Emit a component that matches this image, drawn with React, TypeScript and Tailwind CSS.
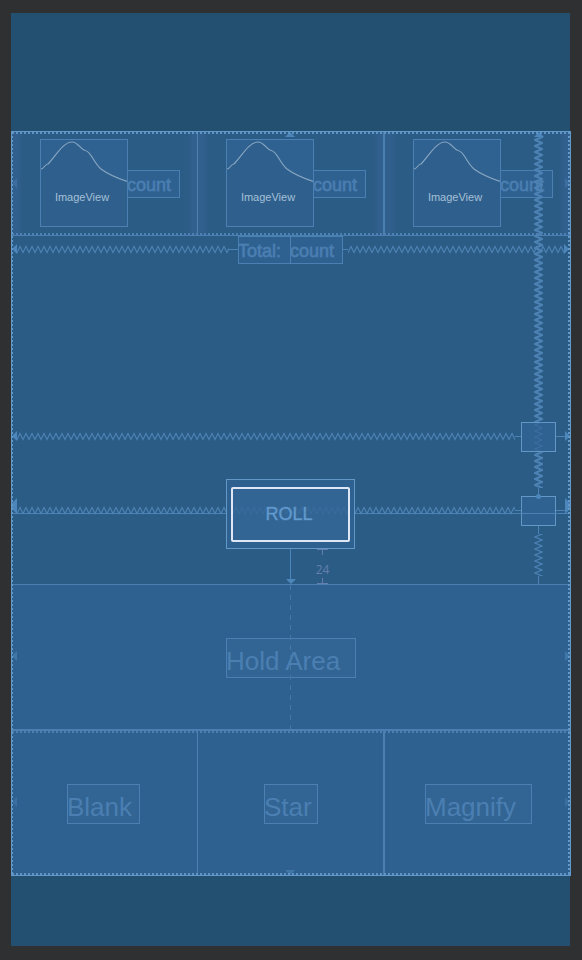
import { useId } from "react";
import type { ReactNode } from "react";

function HSpring({ className = "" }: { className?: string }) {
  const id = useId();
  return (
    <svg className={`h-[9px] min-w-0 ${className}`} aria-hidden="true">
      <defs>
        <pattern id={id} width="6" height="9" patternUnits="userSpaceOnUse">
          <path d="M-1 5.500 L0 7.500 L3 1.500 L6 7.500 L7 5.500" fill="none" stroke="#4d82b5" strokeWidth="1.150" />
        </pattern>
      </defs>
      <rect width="100%" height="100%" fill={`url(#${id})`} />
    </svg>
  );
}

function VSpring({ className = "", heavy = false }: { className?: string; heavy?: boolean }) {
  const id = useId();
  return (
    <svg className={`w-[9px] shrink-0 ${className}`} aria-hidden="true">
      <defs>
        <pattern id={id} width="9" height="6" patternUnits="userSpaceOnUse">
          <path
            d="M5.700 -1 L8 0 L1 3 L8 6 L5.700 7"
            fill="none"
            stroke="#4d82b5"
            strokeWidth={heavy ? 2 : 1.2}
          />
        </pattern>
      </defs>
      <rect width="100%" height="100%" fill={`url(#${id})`} />
    </svg>
  );
}

function Arrow({ dir, className = "" }: { dir: "left" | "right" | "up" | "down"; className?: string }) {
  const d = {
    left: "M0 5 L5 0 V10 Z",
    right: "M5 5 L0 0 V10 Z",
    up: "M5 0 L10 5 H0 Z",
    down: "M5 5 L10 0 H0 Z",
  }[dir];
  const size = dir === "left" || dir === "right" ? "w-[5px] h-[10px]" : "w-[10px] h-[5px]";
  return (
    <svg className={`${size} shrink-0 ${className}`} aria-hidden="true">
      <path d={d} fill="#4d86bb" />
    </svg>
  );
}

function DottedH({ className = "" }: { className?: string }) {
  return (
    <div
      className={`h-0.5 bg-[repeating-linear-gradient(90deg,currentColor_0_2px,transparent_2px_4px)] ${className}`}
    />
  );
}

function ImageCell({ className = "" }: { className?: string }) {
  return (
    <div className={`relative flex min-w-0 pt-[7px] ${className}`}>
      <div className="absolute inset-y-0 left-0 w-[11px] bg-linear-to-r from-[#315f8e] via-[#315f8e] to-transparent" />
      <div className="absolute inset-y-0 right-0 w-[11px] bg-linear-to-l from-[#315f8e] via-[#315f8e] to-transparent" />
      <div className="relative flex h-[88px] w-[88px] shrink-0 justify-center border border-[#4d80b2] bg-[#2f5f8c] pr-1">
        <svg className="absolute inset-0 h-[86px] w-[86px]" viewBox="0 0 86 86" fill="none" aria-hidden="true">
          <path d="M0 0H86V42C70 36 59 31 52 21C48 15 47 10 42 10C37 9 34 1 29 1C22 1 14 16 7 24C5 24 3 28 0 29Z" fill="#2f6291" />
          <path
            d="M0 29C3 29 4 24 7 24C14 17 22 2 31 2C37 2 39 9 44 10.500C50 11 52 22 60 29C68 35 76 38 86 41.500"
            stroke="#86a5c1"
            strokeWidth="1.200"
          />
        </svg>
        <span className="relative mt-[49px] text-[11px] leading-4 text-[#a5c0d8]">ImageView</span>
      </div>
      <Label className="mt-[31px] -ml-px">count</Label>
    </div>
  );
}

function Label({ children, className = "" }: { children: ReactNode; className?: string }) {
  return (
    <div
      className={`relative h-7 w-[53px] shrink-0 -indent-px whitespace-pre border border-[#4d80b2] bg-[#2e6190] text-[18px] leading-7 text-[#4b7fb2] [-webkit-text-stroke:1px_#4b7fb2b0] ${className}`}
    >
      {children}
    </div>
  );
}

function BigLabel({ children, className = "" }: { children: ReactNode; className?: string }) {
  return (
    <div
      className={`h-10 -indent-px whitespace-nowrap border border-[#4d80b2] bg-[#326594] text-[26px] leading-[44px] text-[#4b7fb2] ${className}`}
    >
      {children}
    </div>
  );
}

function Anchor({ className = "" }: { className?: string }) {
  return <div className={`h-[30px] w-[35px] shrink-0 border border-[#6297c6] bg-[#306293]/85 ${className}`} />;
}

function VerticalChain() {
  return (
    <div className="absolute top-0 right-[26px] flex h-[452px] w-[11px] flex-col items-center">
      <Arrow dir="up" />
      <VSpring heavy className="h-[285px]" />
      <VSpring className="h-[30px] opacity-40" />
      <VSpring heavy className="h-[36px]" />
      <div className="h-[6px] w-px bg-[#4d82b5]" />
      <div className="h-[5px] w-[5px] rounded-full bg-[#4d86bb]" />
      <div className="h-[27px]" />
      <div className="h-[8px] w-px bg-[#4d82b5]" />
      <VSpring className="h-[42px]" />
      <div className="w-px flex-1 bg-[#4d82b5]" />
    </div>
  );
}

export default function App() {
  return (
    <main className="min-h-screen bg-[#2f3031] pt-[13px] pr-3 pb-[14px] pl-[11px] font-['Liberation_Sans',Arial,sans-serif]">
      <div className="bg-[#234f70] pt-[118px] pb-[70px]">
        <div className="relative -mr-px border border-[#6399c9] bg-[#2b5c85]">
          <section className="relative grid h-[104px] grid-cols-3 border-b border-[#4d80b2]">
            <ImageCell className="pl-[28px]" />
            <ImageCell className="-ml-px border-l border-[#4d80b2] pl-[28px]" />
            <ImageCell className="-ml-px border-l-2 border-[#4d80b2] pl-[28px]" />
            <Arrow dir="up" className="absolute top-0 left-1/2 -ml-[6px]" />
            <Arrow dir="left" className="absolute top-[46px] left-0 opacity-40" />
            <Arrow dir="right" className="absolute top-[46px] right-0 opacity-40" />
            <DottedH className="absolute inset-x-0 bottom-0 text-[#4d80b2]" />
          </section>

          <section className="grid h-7 grid-cols-[minmax(0,1fr)_105px_minmax(0,1fr)] pr-px">
            <div className="flex items-center pb-[2px]">
              <Arrow dir="left" />
              <HSpring className="flex-1" />
              <div className="h-px w-[9px] bg-[#4d82b5]" />
            </div>
            <div className="flex">
              <Label>Total:</Label>
              <Label className="-ml-px">count</Label>
            </div>
            <div className="flex items-center pb-[2px]">
              <div className="h-px w-[5px] bg-[#4d82b5]" />
              <HSpring className="flex-1" />
              <Arrow dir="right" />
            </div>
          </section>

          <section className="mt-[158px] flex items-center">
            <Arrow dir="left" className="mb-[2px]" />
            <HSpring className="mb-[2px] flex-1" />
            <div className="mb-[2px] h-px w-[6px] bg-[#4d82b5]" />
            <Anchor />
            <div className="mb-[2px] h-px w-[9px] bg-[#4d82b5]" />
            <Arrow dir="right" className="mb-[2px]" />
          </section>

          <section className="relative mt-[27px] flex h-[70px] items-start">
            <div className="absolute inset-x-0 top-[34px] h-px bg-[#4d82b5]" />
            <svg className="mt-[19px] h-[16px] w-[5px] shrink-0" aria-hidden="true">
              <path d="M0 5L5 0V16L0 11Z" fill="#4d86bb" />
            </svg>
            <HSpring className="mt-[27px] flex-1" />
            <button
              type="button"
              className="relative h-[70px] w-[129px] shrink-0 border border-[#6297c6] bg-[#2e6190] px-1 pt-[7px] pb-[6px]"
            >
              <span className="flex h-[55px] items-center justify-center rounded-xs border-2 border-[#dfe6f5] bg-[#326594] pr-[3px] text-[18px] text-[#639bcf] [-webkit-text-stroke:1px_#639bcf60]">
                ROLL
              </span>
              <HSpring className="absolute top-[26px] left-[6px] w-[115px] opacity-25" />
            </button>
            <HSpring className="mt-[27px] w-[160px] shrink-0" />
            <div className="mt-[31px] h-px w-[6px] bg-[#4d82b5]" />
            <Anchor className="mt-[17px]" />
            <div className="mt-[31px] h-px w-[9px] bg-[#4d82b5]" />
            <svg className="mt-[19px] h-[16px] w-[5px] shrink-0" aria-hidden="true">
              <path d="M5 5L0 0V16L5 11Z" fill="#4d86bb" />
            </svg>
          </section>

          <section className="relative flex h-[35px] justify-center pr-px">
            <div className="flex w-[11px] flex-col items-center">
              <div className="w-px flex-1 bg-[#4d86bb]" />
              <Arrow dir="down" />
            </div>
            <div className="absolute left-1/2 ml-[25px] flex h-[35px] w-[13px] flex-col items-center text-[#647fae]">
              <div className="h-px w-[11px] shrink-0 bg-current" />
              <div className="h-[5px] w-px shrink-0 bg-current" />
              <span className="h-[23px] font-['Open_Sans',sans-serif] text-[12px] leading-[29px]">24</span>
              <div className="h-[5px] w-px shrink-0 bg-current" />
              <div className="h-px w-[11px] shrink-0 bg-current" />
            </div>
          </section>

          <section className="relative flex h-[145px] justify-center border-t border-[#4d80b2] bg-[#2e6190]">
            <BigLabel className="mt-[53px] w-[130px]">Hold Area</BigLabel>
            <div className="absolute inset-y-0 left-1/2 -ml-px w-px bg-[repeating-linear-gradient(180deg,#4278a8_0_5px,transparent_5px_10px)]" />
            <Arrow dir="left" className="absolute top-[66px] left-0 opacity-60" />
            <Arrow dir="right" className="absolute top-[66px] right-0 opacity-60" />
          </section>

          <section className="relative grid h-[146px] grid-cols-3 border-t-2 border-[#4d80b2] bg-[#2e6190]">
            <DottedH className="absolute inset-x-0 top-0 text-[#4d80b2]" />
            <div className="flex justify-center pt-[53px] pr-[3px]">
              <BigLabel className="w-[73px]">Blank</BigLabel>
            </div>
            <div className="-ml-px flex justify-center border-l border-[#4d80b2] pt-[53px]">
              <BigLabel className="w-[54px]">Star</BigLabel>
            </div>
            <div className="-ml-px flex justify-center border-l-2 border-[#4d80b2] pt-[53px] pl-[2px]">
              <BigLabel className="w-[107px]">Magnify</BigLabel>
            </div>
            <Arrow dir="left" className="absolute top-[66px] left-0 opacity-40" />
            <Arrow dir="right" className="absolute top-[66px] right-0 opacity-40" />
            <Arrow dir="down" className="absolute bottom-0 left-1/2 -ml-[6px] opacity-60" />
          </section>

          <VerticalChain />
          <DottedH className="absolute inset-x-0 top-0 text-[#5e93c4]" />
          <DottedH className="absolute inset-x-0 bottom-0 text-[#5e93c4]" />
          <div className="absolute inset-y-0 left-0 w-px bg-[repeating-linear-gradient(180deg,#6399c9_0_2px,transparent_2px_4px)]" />
          <div className="absolute inset-y-0 right-0 w-0.5 bg-[repeating-linear-gradient(180deg,#6399c9_0_2px,transparent_2px_4px)]" />
        </div>
      </div>
    </main>
  );
}
